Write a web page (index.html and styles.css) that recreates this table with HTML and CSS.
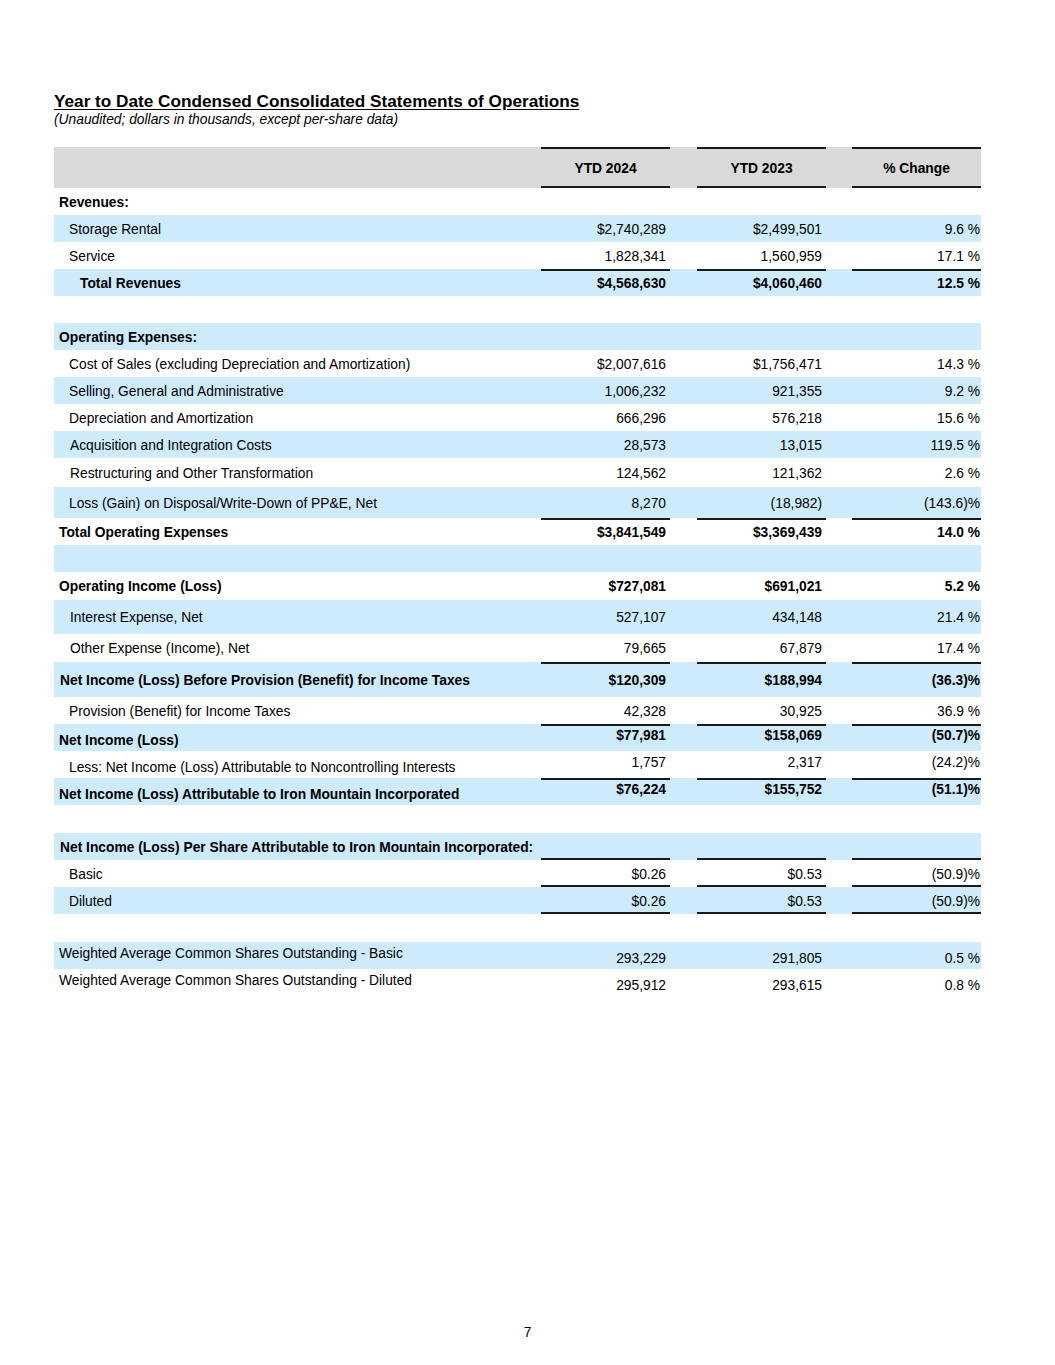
FILE: index.html
```html
<!DOCTYPE html>
<html>
<head>
<meta charset="utf-8">
<link rel="stylesheet" href="styles.css">
</head>
<body>
<div class="page">
  <h1 class="title">Year to Date Condensed Consolidated Statements of Operations</h1>
  <p class="subtitle">(Unaudited; dollars in thousands, except per-share data)</p>
  <table class="fin">
    <colgroup>
      <col class="c-label"><col class="c-val"><col class="c-gap"><col class="c-val"><col class="c-gap2"><col class="c-val">
    </colgroup>
    <tr class="hdr">
      <td></td><td class="h rt rb">YTD 2024</td><td></td><td class="h rt rb">YTD 2023</td><td></td><td class="h rt rb">% Change</td>
    </tr>
    <tr class="r27"><td class="lb b">Revenues:</td><td></td><td></td><td></td><td></td><td></td></tr>
    <tr class="r27 blue"><td class="lb i1">Storage Rental</td><td class="v">$2,740,289</td><td></td><td class="v">$2,499,501</td><td></td><td class="v p">9.6 %</td></tr>
    <tr class="r27"><td class="lb i1">Service</td><td class="v">1,828,341</td><td></td><td class="v">1,560,959</td><td></td><td class="v p">17.1 %</td></tr>
    <tr class="r27 blue"><td class="lb i2 b">Total Revenues</td><td class="v b rt">$4,568,630</td><td></td><td class="v b rt">$4,060,460</td><td></td><td class="v p b rt">12.5 %</td></tr>
    <tr class="r27"><td></td><td></td><td></td><td></td><td></td><td></td></tr>
    <tr class="r27 blue"><td class="lb b">Operating Expenses:</td><td></td><td></td><td></td><td></td><td></td></tr>
    <tr class="r27"><td class="lb i1">Cost of Sales (excluding Depreciation and Amortization)</td><td class="v">$2,007,616</td><td></td><td class="v">$1,756,471</td><td></td><td class="v p">14.3 %</td></tr>
    <tr class="r27 blue"><td class="lb i1">Selling, General and Administrative</td><td class="v">1,006,232</td><td></td><td class="v">921,355</td><td></td><td class="v p">9.2 %</td></tr>
    <tr class="r27"><td class="lb i1">Depreciation and Amortization</td><td class="v">666,296</td><td></td><td class="v">576,218</td><td></td><td class="v p">15.6 %</td></tr>
    <tr class="r27 blue"><td class="lb i1b">Acquisition and Integration Costs</td><td class="v">28,573</td><td></td><td class="v">13,015</td><td></td><td class="v p">119.5 %</td></tr>
    <tr class="r29"><td class="lb i1b">Restructuring and Other Transformation</td><td class="v">124,562</td><td></td><td class="v">121,362</td><td></td><td class="v p">2.6 %</td></tr>
    <tr class="r31 blue"><td class="lb i1">Loss (Gain) on Disposal/Write-Down of PP&amp;E, Net</td><td class="v">8,270</td><td></td><td class="v">(18,982)</td><td></td><td class="v p">(143.6)%</td></tr>
    <tr class="r27"><td class="lb b">Total Operating Expenses</td><td class="v b rt">$3,841,549</td><td></td><td class="v b rt">$3,369,439</td><td></td><td class="v p b rt">14.0 %</td></tr>
    <tr class="r27 blue"><td></td><td></td><td></td><td></td><td></td><td></td></tr>
    <tr class="r28"><td class="lb b">Operating Income (Loss)</td><td class="v b">$727,081</td><td></td><td class="v b">$691,021</td><td></td><td class="v p b">5.2 %</td></tr>
    <tr class="r34 blue"><td class="lb i1b">Interest Expense, Net</td><td class="v">527,107</td><td></td><td class="v">434,148</td><td></td><td class="v p">21.4 %</td></tr>
    <tr class="r28"><td class="lb i1b">Other Expense (Income), Net</td><td class="v">79,665</td><td></td><td class="v">67,879</td><td></td><td class="v p">17.4 %</td></tr>
    <tr class="r35 blue"><td class="lb i0b b">Net Income (Loss) Before Provision (Benefit) for Income Taxes</td><td class="v b rt">$120,309</td><td></td><td class="v b rt">$188,994</td><td></td><td class="v p b rt">(36.3)%</td></tr>
    <tr class="r27"><td class="lb i1">Provision (Benefit) for Income Taxes</td><td class="v">42,328</td><td></td><td class="v">30,925</td><td></td><td class="v p">36.9 %</td></tr>
    <tr class="r27 blue"><td class="lb b low">Net Income (Loss)</td><td class="v b rt high">$77,981</td><td></td><td class="v b rt high">$158,069</td><td></td><td class="v p b rt high">(50.7)%</td></tr>
    <tr class="r27"><td class="lb i1 low">Less: Net Income (Loss) Attributable to Noncontrolling Interests</td><td class="v high">1,757</td><td></td><td class="v high">2,317</td><td></td><td class="v p high">(24.2)%</td></tr>
    <tr class="r27 blue"><td class="lb b low">Net Income (Loss) Attributable to Iron Mountain Incorporated</td><td class="v b rt high">$76,224</td><td></td><td class="v b rt high">$155,752</td><td></td><td class="v p b rt high">(51.1)%</td></tr>
    <tr class="r28"><td></td><td></td><td></td><td></td><td></td><td></td></tr>
    <tr class="r27 blue"><td class="lb i0b b">Net Income (Loss) Per Share Attributable to Iron Mountain Incorporated:</td><td class="rb"></td><td></td><td class="rb"></td><td></td><td class="rb"></td></tr>
    <tr class="r27"><td class="lb i1">Basic</td><td class="v rb">$0.26</td><td></td><td class="v rb">$0.53</td><td></td><td class="v p rb">(50.9)%</td></tr>
    <tr class="r27 blue"><td class="lb i1">Diluted</td><td class="v rb">$0.26</td><td></td><td class="v rb">$0.53</td><td></td><td class="v p rb">(50.9)%</td></tr>
    <tr class="r28"><td></td><td></td><td></td><td></td><td></td><td></td></tr>
    <tr class="r27 blue"><td class="lb high">Weighted Average Common Shares Outstanding - Basic</td><td class="v low">293,229</td><td></td><td class="v low">291,805</td><td></td><td class="v p low">0.5 %</td></tr>
    <tr class="r27"><td class="lb high">Weighted Average Common Shares Outstanding - Diluted</td><td class="v low">295,912</td><td></td><td class="v low">293,615</td><td></td><td class="v p low">0.8 %</td></tr>
  </table>
  <div class="spacer"></div>
  <div class="pagenum">7</div>
</div>
</body>
</html>
```

FILE: styles.css
```css
html, body {
  margin: 0;
  padding: 0;
  background: #ffffff;
}
body {
  font-family: "Liberation Sans", Arial, sans-serif;
  color: #000;
}
.page {
  width: 1055px;
  height: 1365px;
  box-sizing: border-box;
  padding: 91px 74px 0 54px;
  display: flex;
  flex-direction: column;
}
.title {
  margin: 0;
  font-size: 17.2px;
  font-weight: bold;
  text-decoration: underline;
  text-underline-offset: 2px;
  line-height: 20px;
}
.subtitle {
  margin: 0;
  font-size: 13.8px;
  font-style: italic;
  line-height: 18px;
}
.fin {
  margin-top: 18px;
  width: 927px;
  border-collapse: separate;
  border-spacing: 0;
  font-size: 13.8px;
  table-layout: fixed;
}
.c-label { width: 487px; }
.c-val { width: 129px; }
.c-gap { width: 27px; }
.c-gap2 { width: 26px; }
.fin td {
  padding: 2px 0 0 0;
  white-space: nowrap;
  vertical-align: middle;
  line-height: 16px;
}
.hdr { background: #d9d9d9; height: 41px; }
.hdr .h { text-align: center; font-weight: bold; }
.blue { background: #cdebfb; }
.r27 { height: 27px; }
.r28 { height: 28px; }
.r29 { height: 29px; }
.r31 { height: 31px; }
.r34 { height: 34px; }
.r35 { height: 35px; }
.lb { padding-left: 5px !important; }
.lb.i1 { padding-left: 15px !important; }
.lb.i1b { padding-left: 16px !important; }
.lb.i2 { padding-left: 26px !important; }
.lb.i0b { padding-left: 6px !important; }
.b { font-weight: bold; }
.v { text-align: right; padding-right: 4px !important; }
.v.p { padding-right: 1px !important; }
.rt {
  background-image: linear-gradient(#1a1a1a, #1a1a1a);
  background-size: 100% 2px;
  background-position: top;
  background-repeat: no-repeat;
}
.rb {
  background-image: linear-gradient(#1a1a1a, #1a1a1a);
  background-size: 100% 2px;
  background-position: bottom;
  background-repeat: no-repeat;
}
.rt.rb {
  background-image: linear-gradient(#1a1a1a, #1a1a1a), linear-gradient(#1a1a1a, #1a1a1a);
  background-size: 100% 2px, 100% 2px;
  background-position: top, bottom;
  background-repeat: no-repeat, no-repeat;
}
.low { padding-top: 7px !important; }
.high { padding-bottom: 5px !important; }
.spacer { flex: 1; }
.pagenum {
  text-align: center;
  font-size: 13.8px;
  line-height: 16px;
  margin: 0 -20px 24px 0;
}
```
